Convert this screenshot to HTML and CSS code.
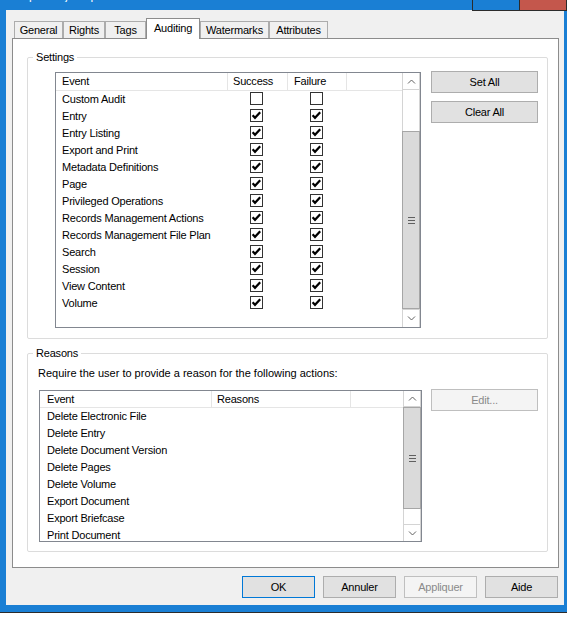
FILE: index.html
```html
<!DOCTYPE html>
<html>
<head>
<meta charset="utf-8">
<link rel="stylesheet" href="styles.css">
</head>
<body>
<div class="window">
  <div class="titlebar">
    <span class="title">Repository Properties</span>
    <div class="ctl ctl-max"></div>
    <div class="ctl ctl-close"></div>
  </div>
  <div class="dialog">
    <div class="tabs">
      <div class="tab t-general">General</div>
      <div class="tab t-rights">Rights</div>
      <div class="tab t-tags">Tags</div>
      <div class="tab t-auditing active">Auditing</div>
      <div class="tab t-water">Watermarks</div>
      <div class="tab t-attr">Attributes</div>
    </div>
    <div class="panel">
      <div class="group group-settings">
        <div class="group-label">Settings</div>
        <div class="group-row settings-row">
          <div class="list list-settings">
            <div class="list-main">
              <div class="list-head head-settings">
                <div class="col s-event">Event</div>
                <div class="col s-succ">Success</div>
                <div class="col s-fail">Failure</div>
                <div class="col s-fill"></div>
              </div>
              <div class="row"><div class="cell s-event">Custom Audit</div><div class="cell chk s-succ"><span class="cb"></span></div><div class="cell chk s-fail"><span class="cb"></span></div></div>
              <div class="row"><div class="cell s-event">Entry</div><div class="cell chk s-succ"><span class="cb"><svg width="11" height="11" viewBox="0 0 11 11"><polyline points="1.6,5.2 4,7.8 9.2,2.2" fill="none" stroke="#000" stroke-width="2.2"/></svg></span></div><div class="cell chk s-fail"><span class="cb"><svg width="11" height="11" viewBox="0 0 11 11"><polyline points="1.6,5.2 4,7.8 9.2,2.2" fill="none" stroke="#000" stroke-width="2.2"/></svg></span></div></div>
              <div class="row"><div class="cell s-event">Entry Listing</div><div class="cell chk s-succ"><span class="cb"><svg width="11" height="11" viewBox="0 0 11 11"><polyline points="1.6,5.2 4,7.8 9.2,2.2" fill="none" stroke="#000" stroke-width="2.2"/></svg></span></div><div class="cell chk s-fail"><span class="cb"><svg width="11" height="11" viewBox="0 0 11 11"><polyline points="1.6,5.2 4,7.8 9.2,2.2" fill="none" stroke="#000" stroke-width="2.2"/></svg></span></div></div>
              <div class="row"><div class="cell s-event">Export and Print</div><div class="cell chk s-succ"><span class="cb"><svg width="11" height="11" viewBox="0 0 11 11"><polyline points="1.6,5.2 4,7.8 9.2,2.2" fill="none" stroke="#000" stroke-width="2.2"/></svg></span></div><div class="cell chk s-fail"><span class="cb"><svg width="11" height="11" viewBox="0 0 11 11"><polyline points="1.6,5.2 4,7.8 9.2,2.2" fill="none" stroke="#000" stroke-width="2.2"/></svg></span></div></div>
              <div class="row"><div class="cell s-event">Metadata Definitions</div><div class="cell chk s-succ"><span class="cb"><svg width="11" height="11" viewBox="0 0 11 11"><polyline points="1.6,5.2 4,7.8 9.2,2.2" fill="none" stroke="#000" stroke-width="2.2"/></svg></span></div><div class="cell chk s-fail"><span class="cb"><svg width="11" height="11" viewBox="0 0 11 11"><polyline points="1.6,5.2 4,7.8 9.2,2.2" fill="none" stroke="#000" stroke-width="2.2"/></svg></span></div></div>
              <div class="row"><div class="cell s-event">Page</div><div class="cell chk s-succ"><span class="cb"><svg width="11" height="11" viewBox="0 0 11 11"><polyline points="1.6,5.2 4,7.8 9.2,2.2" fill="none" stroke="#000" stroke-width="2.2"/></svg></span></div><div class="cell chk s-fail"><span class="cb"><svg width="11" height="11" viewBox="0 0 11 11"><polyline points="1.6,5.2 4,7.8 9.2,2.2" fill="none" stroke="#000" stroke-width="2.2"/></svg></span></div></div>
              <div class="row"><div class="cell s-event">Privileged Operations</div><div class="cell chk s-succ"><span class="cb"><svg width="11" height="11" viewBox="0 0 11 11"><polyline points="1.6,5.2 4,7.8 9.2,2.2" fill="none" stroke="#000" stroke-width="2.2"/></svg></span></div><div class="cell chk s-fail"><span class="cb"><svg width="11" height="11" viewBox="0 0 11 11"><polyline points="1.6,5.2 4,7.8 9.2,2.2" fill="none" stroke="#000" stroke-width="2.2"/></svg></span></div></div>
              <div class="row"><div class="cell s-event">Records Management Actions</div><div class="cell chk s-succ"><span class="cb"><svg width="11" height="11" viewBox="0 0 11 11"><polyline points="1.6,5.2 4,7.8 9.2,2.2" fill="none" stroke="#000" stroke-width="2.2"/></svg></span></div><div class="cell chk s-fail"><span class="cb"><svg width="11" height="11" viewBox="0 0 11 11"><polyline points="1.6,5.2 4,7.8 9.2,2.2" fill="none" stroke="#000" stroke-width="2.2"/></svg></span></div></div>
              <div class="row"><div class="cell s-event">Records Management File Plan</div><div class="cell chk s-succ"><span class="cb"><svg width="11" height="11" viewBox="0 0 11 11"><polyline points="1.6,5.2 4,7.8 9.2,2.2" fill="none" stroke="#000" stroke-width="2.2"/></svg></span></div><div class="cell chk s-fail"><span class="cb"><svg width="11" height="11" viewBox="0 0 11 11"><polyline points="1.6,5.2 4,7.8 9.2,2.2" fill="none" stroke="#000" stroke-width="2.2"/></svg></span></div></div>
              <div class="row"><div class="cell s-event">Search</div><div class="cell chk s-succ"><span class="cb"><svg width="11" height="11" viewBox="0 0 11 11"><polyline points="1.6,5.2 4,7.8 9.2,2.2" fill="none" stroke="#000" stroke-width="2.2"/></svg></span></div><div class="cell chk s-fail"><span class="cb"><svg width="11" height="11" viewBox="0 0 11 11"><polyline points="1.6,5.2 4,7.8 9.2,2.2" fill="none" stroke="#000" stroke-width="2.2"/></svg></span></div></div>
              <div class="row"><div class="cell s-event">Session</div><div class="cell chk s-succ"><span class="cb"><svg width="11" height="11" viewBox="0 0 11 11"><polyline points="1.6,5.2 4,7.8 9.2,2.2" fill="none" stroke="#000" stroke-width="2.2"/></svg></span></div><div class="cell chk s-fail"><span class="cb"><svg width="11" height="11" viewBox="0 0 11 11"><polyline points="1.6,5.2 4,7.8 9.2,2.2" fill="none" stroke="#000" stroke-width="2.2"/></svg></span></div></div>
              <div class="row"><div class="cell s-event">View Content</div><div class="cell chk s-succ"><span class="cb"><svg width="11" height="11" viewBox="0 0 11 11"><polyline points="1.6,5.2 4,7.8 9.2,2.2" fill="none" stroke="#000" stroke-width="2.2"/></svg></span></div><div class="cell chk s-fail"><span class="cb"><svg width="11" height="11" viewBox="0 0 11 11"><polyline points="1.6,5.2 4,7.8 9.2,2.2" fill="none" stroke="#000" stroke-width="2.2"/></svg></span></div></div>
              <div class="row"><div class="cell s-event">Volume</div><div class="cell chk s-succ"><span class="cb"><svg width="11" height="11" viewBox="0 0 11 11"><polyline points="1.6,5.2 4,7.8 9.2,2.2" fill="none" stroke="#000" stroke-width="2.2"/></svg></span></div><div class="cell chk s-fail"><span class="cb"><svg width="11" height="11" viewBox="0 0 11 11"><polyline points="1.6,5.2 4,7.8 9.2,2.2" fill="none" stroke="#000" stroke-width="2.2"/></svg></span></div></div>
            </div>
            <div class="sb sb-settings">
              <div class="sb-btn sb-up"><svg width="9" height="5" viewBox="0 0 9 5"><polyline points="1,4.5 4.5,1 8,4.5" fill="none" stroke="#606060" stroke-width="1"/></svg></div>
              <div class="sb-track t1"></div>
              <div class="sb-thumb th1"><svg width="7" height="7" viewBox="0 0 7 7"><rect x="0" y="0" width="7" height="1" fill="#606060"/><rect x="0" y="3" width="7" height="1" fill="#606060"/><rect x="0" y="6" width="7" height="1" fill="#606060"/></svg></div>
              <div class="sb-btn sb-down"><svg width="9" height="5" viewBox="0 0 9 5"><polyline points="1,0.5 4.5,4 8,0.5" fill="none" stroke="#606060" stroke-width="1"/></svg></div>
            </div>
          </div>
          <div class="side">
            <button class="btn">Set All</button>
            <button class="btn">Clear All</button>
          </div>
        </div>
      </div>

      <div class="group group-reasons">
        <div class="group-label">Reasons</div>
        <div class="reason-text">Require the user to provide a reason for the following actions:</div>
        <div class="group-row reasons-row">
          <div class="list list-reasons">
            <div class="list-main">
              <div class="list-head head-reasons">
                <div class="col r-event">Event</div>
                <div class="col r-reason">Reasons</div>
                <div class="col r-fill"></div>
              </div>
              <div class="row"><div class="cell r-event">Delete Electronic File</div></div>
              <div class="row"><div class="cell r-event">Delete Entry</div></div>
              <div class="row"><div class="cell r-event">Delete Document Version</div></div>
              <div class="row"><div class="cell r-event">Delete Pages</div></div>
              <div class="row"><div class="cell r-event">Delete Volume</div></div>
              <div class="row"><div class="cell r-event">Export Document</div></div>
              <div class="row"><div class="cell r-event">Export Briefcase</div></div>
              <div class="row"><div class="cell r-event">Print Document</div></div>
            </div>
            <div class="sb sb-reasons">
              <div class="sb-btn sb-up r-up"><svg width="9" height="5" viewBox="0 0 9 5"><polyline points="1,4.5 4.5,1 8,4.5" fill="none" stroke="#606060" stroke-width="1"/></svg></div>
              <div class="sb-thumb th2"><svg width="7" height="7" viewBox="0 0 7 7"><rect x="0" y="0" width="7" height="1" fill="#606060"/><rect x="0" y="3" width="7" height="1" fill="#606060"/><rect x="0" y="6" width="7" height="1" fill="#606060"/></svg></div>
              <div class="sb-track t2"></div>
              <div class="sb-btn sb-down r-down"><svg width="9" height="5" viewBox="0 0 9 5"><polyline points="1,0.5 4.5,4 8,0.5" fill="none" stroke="#606060" stroke-width="1"/></svg></div>
            </div>
          </div>
          <div class="side side-reasons">
            <button class="btn" disabled>Edit...</button>
          </div>
        </div>
      </div>
    </div>
    <div class="actions">
      <button class="btn btn-a btn-default">OK</button>
      <button class="btn btn-a">Annuler</button>
      <button class="btn btn-a" disabled>Appliquer</button>
      <button class="btn btn-a">Aide</button>
    </div>
  </div>
</div>
</body>
</html>
```

FILE: styles.css
```css
* { box-sizing: border-box; }

body {
  margin: 0;
  background: #ffffff;
  font-family: "Liberation Sans", Arial, sans-serif;
  font-size: 11px;
  letter-spacing: -0.2px;
  color: #000;
}

.window {
  width: 567px;
  background: #1a7fd4;
  padding-bottom: 7px;
  border-bottom: 1px solid #2b2b2b;
}

.titlebar {
  height: 10px;
  display: flex;
  align-items: flex-start;
  position: relative;
  z-index: 1;
}

.title {
  flex: 1;
  color: #fff;
  font-size: 12px;
  line-height: 12px;
  height: 12px;
  margin-top: -10px;
  padding-left: 14px;
  white-space: nowrap;
  overflow: hidden;
}

.ctl {
  height: 11px;
  border-left: 1px solid #2b2b2b;
  border-bottom: 1px solid #2b2b2b;
}

.ctl-max {
  width: 47px;
  background: #1a7fd4;
}

.ctl-close {
  width: 48px;
  background: #c4574c;
  border-right: 1px solid #2b2b2b;
}

.dialog {
  margin: 0 3px 0 6px;
  height: 595px;
  background: #f0f0f0;
  padding-top: 8px;
}

.tabs {
  display: flex;
  align-items: flex-end;
  height: 20px;
  padding-left: 8px;
}

.tab {
  height: 17px;
  line-height: 16px;
  border: 1px solid #acacac;
  border-bottom: none;
  background: #f0f0f0;
  text-align: center;
  white-space: nowrap;
}

.tab.active {
  position: relative;
  height: 21px;
  line-height: 18px;
  margin-bottom: -1px;
  background: #fff;
  border-color: #8c8c8c;
}

.t-general { width: 49px; }
.t-rights { width: 42px; }
.t-tags { width: 41px; }
.t-auditing { width: 54px; }
.t-water { width: 69px; }
.t-attr { width: 59px; }

.panel {
  margin: 0 5px 0 6px;
  height: 530px;
  border: 1px solid #8c8c8c;
  background: #fff;
  padding: 18px 10px 0 14px;
}

.group {
  border: 1px solid #dcdcdc;
  border-radius: 2px;
}

.group-settings { height: 282px; }

.group-reasons {
  height: 199px;
  margin-top: 14px;
}

.group-label {
  width: max-content;
  margin: -8px 0 0 5px;
  padding: 0 3px;
  line-height: 15px;
  background: #fff;
}

.group-row {
  display: flex;
  align-items: flex-start;
}

.settings-row {
  margin-top: 7px;
  padding-left: 27px;
}

.reason-text {
  margin: 5px 0 0 10px;
  line-height: 15px;
  letter-spacing: 0;
}

.reasons-row {
  margin-top: 9px;
  padding-left: 11px;
}

.list {
  display: flex;
  border: 1px solid #828790;
  background: #fff;
  overflow: hidden;
  flex: none;
}

.list-settings { width: 366px; height: 256px; }
.list-reasons { width: 383px; height: 152px; }

.list-main {
  flex: 1;
  overflow: hidden;
}

.list-head {
  display: flex;
  border-bottom: 1px solid #e5e5e5;
}

.head-settings { height: 18px; }
.head-reasons { height: 17px; }

.col {
  height: 100%;
  line-height: 16px;
  border-right: 1px solid #e5e5e5;
  white-space: nowrap;
}

.row {
  display: flex;
  height: 17px;
  line-height: 17px;
  white-space: nowrap;
}

.s-event { width: 172px; padding-left: 6px; flex: none; }
.s-succ { width: 60px; padding-left: 5px; flex: none; }
.s-fail { width: 59px; padding-left: 6px; flex: none; }
.s-fill { flex: 1; border-right: none; }

.r-event { width: 172px; padding-left: 7px; flex: none; }
.r-reason { width: 139px; padding-left: 5px; flex: none; }
.r-fill { flex: 1; border-right: none; }

.cell.chk { padding-left: 22px; padding-top: 1px; }

.cb {
  display: block;
  width: 13px;
  height: 13px;
  border: 1px solid #333;
  background: #fff;
}

.cb svg { display: block; }

.sb {
  width: 18px;
  flex: none;
  display: flex;
  flex-direction: column;
  background: #fff;
  border-left: 1px solid #d4d4d4;
  border-right: 1px solid #d4d4d4;
}

.sb-btn {
  display: flex;
  align-items: center;
  justify-content: center;
  flex: none;
  background: #fff;
}

.sb-btn svg { display: block; }

.sb-up { height: 17px; border-bottom: 1px solid #d4d4d4; }
.sb-down { height: 18px; border-top: 1px solid #d4d4d4; }

.sb-track { flex: none; background: #fff; }

.sb-thumb {
  flex: none;
  margin: 0 -1px;
  background: #dadada;
  border: 1px solid #a6a6a6;
  display: flex;
  align-items: center;
  justify-content: center;
}

.t1 { height: 41px; }
.th1 { height: 178px; }

.r-up { height: 16px; }
.th2 { height: 102px; }
.t2 { height: 15px; }
.r-down { height: 17px; }

.side {
  display: flex;
  flex-direction: column;
  gap: 8px;
  margin-left: 10px;
  margin-top: -1px;
}

.side-reasons { margin-left: 9px; }

.btn {
  width: 107px;
  height: 22px;
  padding: 0;
  margin: 0;
  font: inherit;
  letter-spacing: inherit;
  color: #000;
  background: #e1e1e1;
  border: 1px solid #adadad;
  border-radius: 0;
  text-align: center;
}

.btn:disabled {
  background: #f4f4f4;
  border-color: #bfbfbf;
  color: #8a8a8a;
}

.actions {
  display: flex;
  justify-content: flex-end;
  gap: 8px;
  margin-top: 8px;
  padding-right: 6px;
}

.btn-a { width: 73px; }

.btn-default { border-color: #0078d7; }
```
